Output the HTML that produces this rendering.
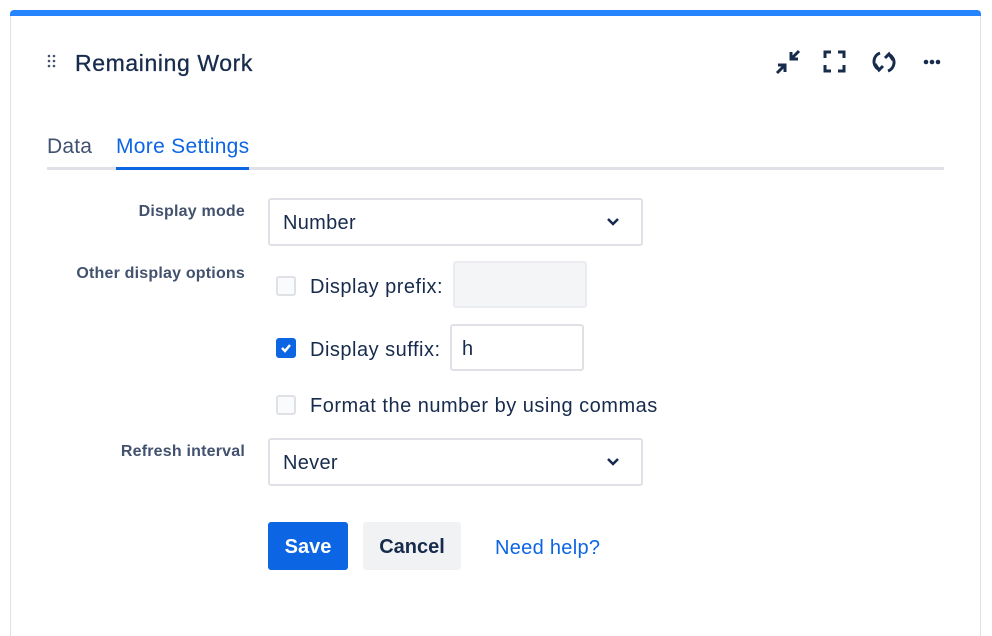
<!DOCTYPE html>
<html style="width:992px;height:636px;overflow:hidden"><head><style>
*{box-sizing:border-box;margin:0;padding:0}
body{width:992px;height:636px;background:#fff;font-family:"Liberation Sans",sans-serif;color:#172b4d;position:relative;overflow:hidden}
.card{position:absolute;left:10px;top:10px;width:971px;height:626px;border:1px solid #dfe1e6;border-top:none;border-bottom:none;border-radius:4px 4px 0 0}
.bar{position:absolute;left:10px;top:10px;width:971px;height:6px;background:#2684ff;border-radius:4px 4px 0 0}
.a{position:absolute}
.lbl{font-size:16px;color:#42526e;font-weight:bold;text-align:right;width:235px;left:10px;letter-spacing:0.2px}
.sel{border:2px solid #dfe1e6;border-radius:3px;width:375px;height:48px;font-size:20px;padding:12px 13px;color:#172b4d;letter-spacing:0.3px}
.cb{width:20px;height:20px;border:2px solid #dfe1e6;border-radius:3px;background:#fafbfc}
.t{font-size:20px;color:#172b4d;letter-spacing:0.5px}
</style></head><body>
<div class="card"></div><div class="bar"></div>
<svg class="a" style="left:46px;top:54px" width="12" height="14"><g fill="#42526e"><circle cx="3" cy="2" r="1.3"/><circle cx="8" cy="2" r="1.3"/><circle cx="3" cy="7" r="1.3"/><circle cx="8" cy="7" r="1.3"/><circle cx="3" cy="12" r="1.3"/><circle cx="8" cy="12" r="1.3"/></g></svg>
<div class="a" style="left:75px;top:50px;font-size:23px;color:#172b4d;letter-spacing:0.6px;-webkit-text-stroke:0.3px #172b4d">Remaining Work</div>
<svg class="a" style="left:774px;top:48px" width="180" height="28" fill="none" stroke="#172b4d" stroke-width="3">
<path d="M3 25l8-8M4 17h7v7M25 3l-8 8M17 4v7h7"/>
<path d="M51 10V4h6M64 4h6v6M70 17v6h-6M57 23h-6v-6"/>
<path d="M106 5a9 9 0 0 0 -2 16"/><path d="M101 16l4 6 4-4" stroke-linejoin="miter"/>
<path d="M114 23a9 9 0 0 0 2 -16"/><path d="M119 12l-4-6-4 4"/>
<g fill="#172b4d" stroke="none"><circle cx="152" cy="14" r="2.3"/><circle cx="158" cy="14" r="2.3"/><circle cx="164" cy="14" r="2.3"/></g>
</svg>
<div class="a" style="left:47px;top:135px;font-size:21px;color:#42526e;letter-spacing:0.2px">Data</div>
<div class="a" style="left:116px;top:135px;font-size:21px;color:#0c66e4;letter-spacing:0.3px">More Settings</div>
<div class="a" style="left:47px;top:167px;width:897px;height:3px;background:#dfe1e6"></div>
<div class="a" style="left:116px;top:167px;width:133px;height:3px;background:#0c66e4"></div>
<div class="a lbl" style="top:203px">Display mode</div>
<div class="a sel" style="left:268px;top:198px">Number</div>
<svg class="a" style="left:606px;top:217px" width="14" height="10"><path d="M2 2l5 5 5-5" stroke="#172b4d" stroke-width="2.5" fill="none"/></svg>
<div class="a lbl" style="top:265px">Other display options</div>
<div class="a cb" style="left:276px;top:276px"></div>
<div class="a t" style="left:310px;top:276px">Display prefix:</div>
<div class="a" style="left:453px;top:261px;width:134px;height:47px;background:#f4f5f7;border:2px solid #ebecf0;border-radius:3px"></div>
<div class="a cb" style="left:276px;top:338px;background:#0c66e4;border-color:#0c66e4"><svg width="16" height="16" style="position:absolute;left:0;top:0"><path d="M4 8l3 3 5-6" stroke="#fff" stroke-width="2.5" fill="none"/></svg></div>
<div class="a t" style="left:310px;top:339px">Display suffix:</div>
<div class="a" style="left:450px;top:324px;width:134px;height:47px;border:2px solid #dfe1e6;border-radius:3px;font-size:20px;padding:12px 10px">h</div>
<div class="a cb" style="left:276px;top:395px"></div>
<div class="a t" style="left:310px;top:395px">Format the number by using commas</div>
<div class="a lbl" style="top:443px">Refresh interval</div>
<div class="a sel" style="left:268px;top:438px">Never</div>
<svg class="a" style="left:606px;top:457px" width="14" height="10"><path d="M2 2l5 5 5-5" stroke="#172b4d" stroke-width="2.5" fill="none"/></svg>
<div class="a" style="left:268px;top:522px;width:80px;height:48px;background:#0c66e4;color:#fff;border-radius:3px;font-size:20px;font-weight:bold;text-align:center;line-height:50px">Save</div>
<div class="a" style="left:363px;top:522px;width:98px;height:48px;background:#f1f2f4;color:#172b4d;border-radius:3px;font-size:20px;font-weight:bold;text-align:center;line-height:50px">Cancel</div>
<div class="a" style="left:495px;top:537px;font-size:20px;color:#0c66e4;letter-spacing:0.3px">Need help?</div>
</body></html>
